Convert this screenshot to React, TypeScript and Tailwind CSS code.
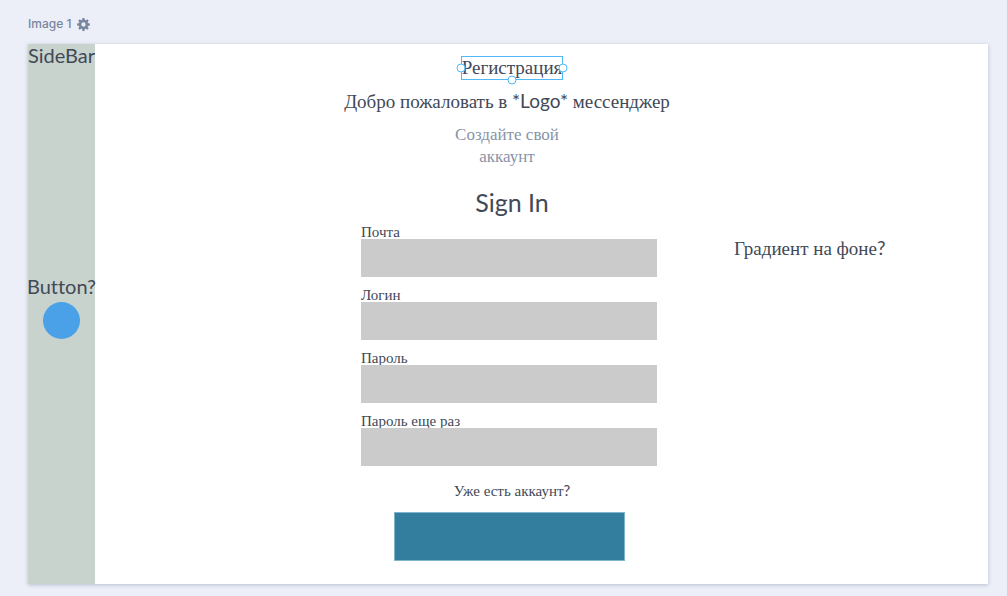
import React from "react";

const fields = [
  { id: "email", label: "Почта", type: "email" },
  { id: "login", label: "Логин", type: "text" },
  { id: "password", label: "Пароль", type: "password" },
  { id: "repeat", label: "Пароль еще раз", type: "password" },
];

function GearIcon() {
  const angles = [0, 45, 90, 135, 180, 225, 270, 315];
  return (
    <svg viewBox="0 0 26 26" className="size-[13px]" aria-hidden="true">
      <circle cx="13" cy="13" r="6.8" fill="none" stroke="currentColor" strokeWidth="5" />
      {angles.map((a) => (
        <path key={a} d="M10.2 5 L11 0.2 H15 L15.8 5 Z" fill="currentColor" transform={`rotate(${a} 13 13)`} />
      ))}
    </svg>
  );
}

function Handle({ className }: { className: string }) {
  return (
    <span
      className={`absolute size-[9px] rounded-full border border-[#4fb9f7] bg-white ${className}`}
    />
  );
}

export default function App() {
  return (
    <div className="flex min-h-screen flex-col bg-[#eceff8] pt-4 pr-[19px] pb-3 pl-7 font-['Liberation_Serif',serif] text-[#414958]">
      <header className="mb-3 flex h-4 items-center gap-1.5 font-['Inter',sans-serif] text-xs font-medium text-[#79869f]">
        <span>Image 1</span>
        <button type="button" aria-label="Settings">
          <GearIcon />
        </button>
      </header>

      <div className="flex flex-1 bg-white shadow-[0_1px_4px_rgba(60,75,110,0.3)]">
        <aside className="flex w-[67px] shrink-0 flex-col items-center bg-[#c9d3cd] font-['Lato',sans-serif] text-xl leading-[22px] whitespace-nowrap [font-variant-ligatures:none]">
          <span>SideBar</span>
          <label htmlFor="side-action" className="mt-[209px]">
            Button?
          </label>
          <button id="side-action" type="button" className="mt-[5px] size-[37px] rounded-full bg-[#4aa1e8]" />
        </aside>

        <main className="grid flex-1 grid-cols-[250fr_328px_315fr] pt-3">
          <form className="col-start-2 flex flex-col items-center">
            <div className="pl-1.5">
              <h1 className="relative px-px text-[19px] leading-6 outline-1 -outline-offset-1 outline-[#4fb9f7]">
                Регистрация
                <Handle className="top-1/2 left-0 -translate-x-1/2 -translate-y-1/2" />
                <Handle className="top-1/2 right-0 translate-x-1/2 -translate-y-1/2" />
                <Handle className="bottom-0 left-1/2 -translate-x-1/2 translate-y-1/2" />
              </h1>
            </div>
            <p className="mt-[9px] pr-1 text-[19px] leading-6 whitespace-nowrap">
              Добро пожаловать в <span className="font-['Lato',sans-serif]">*Logo*</span> мессенджер
            </p>
            <p className="mt-2.5 w-[120px] pr-1 text-center text-[17px] leading-[22px] text-[#8893a7]">
              Создайте свой аккаунт
            </p>
            <h2 className="mt-[18px] pl-1.5 font-['Lato',sans-serif] text-[25px] leading-8">Sign In</h2>

            <div className="mt-[7px] flex w-[296px] flex-col gap-[11px]">
              {fields.map((f) => (
                <div key={f.id} className="flex flex-col">
                  <label htmlFor={f.id} className="text-[15px] leading-[14px]">
                    {f.label}
                  </label>
                  <input id={f.id} type={f.type} className="h-[38px] w-full bg-[#cbcbcb] px-2" />
                </div>
              ))}
            </div>

            <a href="#login" className="mt-3.5 pl-1.5 text-[15px] leading-5">
              Уже есть аккаунт<span className="font-['Lato',sans-serif]">?</span>
            </a>
            <button
              type="submit"
              aria-label="Зарегистрироваться"
              className="mt-[11px] h-[49px] w-[231px] border border-[#7fb4cc] bg-[#337e9f]"
            />
          </form>

          <p className="mt-[180px] ml-[61px] text-[19px] leading-6 whitespace-nowrap">
            Градиент на фоне<span className="font-['Lato',sans-serif]">?</span>
          </p>
        </main>
      </div>
    </div>
  );
}
